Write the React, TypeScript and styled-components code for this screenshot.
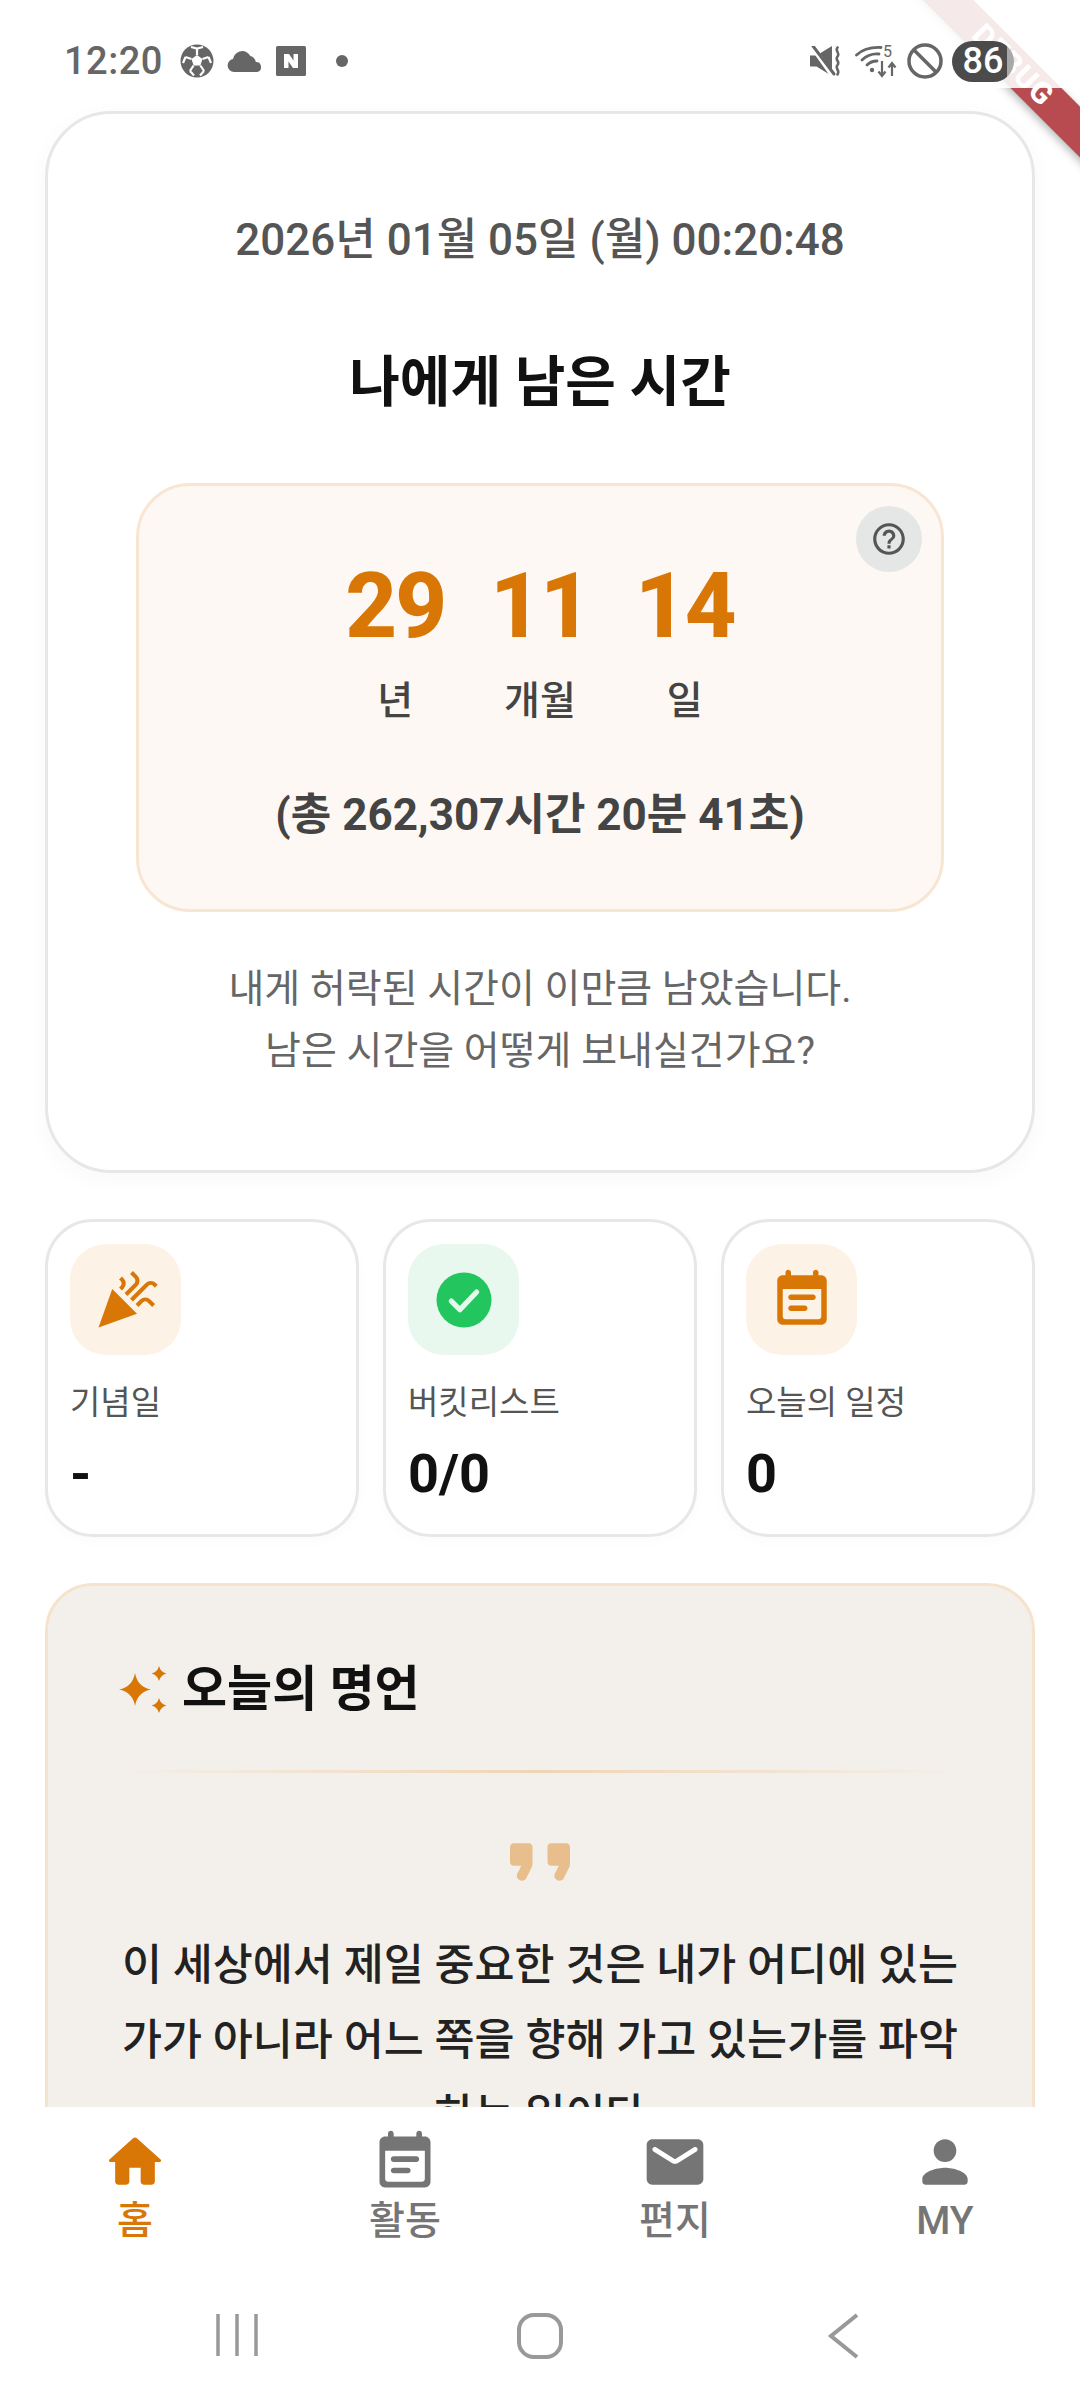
import React from "react";
import styled, { createGlobalStyle } from "styled-components";
import { MdCelebration, MdHelpOutline } from "react-icons/md";

const orange = "#d97706";

const GlobalStyle = createGlobalStyle`
  html, body {
    margin: 0;
    padding: 0;
    background: #fff;
  }
  * { box-sizing: border-box; }
`;

const Page = styled.div`
  position: relative;
  width: 1080px;
  height: 2400px;
  display: flex;
  flex-direction: column;
  overflow: hidden;
  background: #fff;
  font-family: Roboto, "Noto Sans CJK KR", sans-serif;
`;

/* status bar */
const StatusBar = styled.div`
  position: relative;
  z-index: 3;
  height: 88px;
  flex: none;
  display: flex;
  align-items: center;
  justify-content: space-between;
  padding: 34px 66px 0 64px;
  background: rgba(255, 255, 255, 0.88);
  color: #666;
`;

const StatusGroup = styled.div<{ $gap: number }>`
  display: flex;
  align-items: center;
  gap: ${(p) => p.$gap}px;
`;

const Clock = styled.span`
  font-size: 38px;
  font-weight: 500;
  letter-spacing: 0.5px;
  margin-right: 4px;
`;

const DotGap = styled.span`
  width: 4px;
`;

const Battery = styled.div`
  width: 62px;
  height: 41px;
  margin-left: 1px;
  border-radius: 21px;
  overflow: hidden;
  display: flex;
  align-items: center;
  justify-content: center;
  color: #fff;
  font-size: 36px;
  font-weight: 500;
  background: linear-gradient(to right, #4b4b4b 88%, #a8a8a8 88%);
`;

const Ribbon = styled.div`
  position: absolute;
  z-index: 2;
  top: 47px;
  left: 863px;
  width: 300px;
  height: 36px;
  transform: rotate(45deg);
  background: rgba(165, 30, 35, 0.8);
  box-shadow: 0 3px 9px rgba(0, 0, 0, 0.28);
  color: #fff;
  font-size: 30px;
  font-weight: 800;
  line-height: 36px;
  text-align: center;
  letter-spacing: 1px;
`;

/* scrolling content */
const Scroll = styled.main`
  flex: 1;
  min-height: 0;
  overflow: hidden;
  display: flex;
  flex-direction: column;
  gap: 46px;
  padding: 23px 45px 0;
`;

const HeroCard = styled.section`
  flex: none;
  height: 1062px;
  background: #fff;
  border: 3px solid #e7e7e7;
  border-radius: 66px;
  box-shadow: 0 6px 24px rgba(0, 0, 0, 0.03);
  display: flex;
  flex-direction: column;
  align-items: center;
  padding: 96px 88px 0;
`;

const DateText = styled.div`
  font-size: 44px;
  line-height: 60px;
  font-weight: 500;
  color: #555;
`;

const HeroTitle = styled.h1`
  margin: 72px 0 0;
  font-size: 55px;
  line-height: 80px;
  font-weight: 700;
  color: #111;
`;

const RemainBox = styled.div`
  position: relative;
  width: 808px;
  height: 429px;
  margin-top: 61px;
  padding-top: 76px;
  background: #fdf8f3;
  border: 3px solid #f8e6d2;
  border-radius: 54px;
  display: flex;
  flex-direction: column;
  align-items: center;
`;

const HelpButton = styled.div`
  position: absolute;
  top: 20px;
  right: 19px;
  width: 66px;
  height: 66px;
  border-radius: 50%;
  background: #e5e6e6;
  color: #555;
  display: flex;
  align-items: center;
  justify-content: center;
  font-size: 38px;
`;

const Units = styled.div`
  display: flex;
  gap: 45px;
`;

const Unit = styled.div`
  display: flex;
  flex-direction: column;
  align-items: center;
`;

const CountValue = styled.div`
  font-size: 90px;
  line-height: 90px;
  font-weight: 800;
  letter-spacing: -2px;
  color: ${orange};
`;

const UnitLabel = styled.div`
  margin-top: 26px;
  font-size: 39px;
  line-height: 46px;
  font-weight: 500;
  color: #444;
`;

const TotalText = styled.div`
  margin-top: 61px;
  font-size: 44px;
  line-height: 60px;
  font-weight: 700;
  color: #444;
`;

const Caption = styled.p`
  margin: 46px 0 0;
  font-size: 39px;
  line-height: 62px;
  text-align: center;
  color: #666;
`;

const StatGrid = styled.div`
  flex: none;
  display: grid;
  grid-template-columns: repeat(3, 1fr);
  gap: 24px;
`;

const StatCard = styled.div`
  height: 318px;
  padding: 22px;
  background: #fff;
  border: 3px solid #e7e7e7;
  border-radius: 48px;
  box-shadow: 0 4px 14px rgba(0, 0, 0, 0.02);
`;

const StatIcon = styled.div<{ $bg: string }>`
  width: 111px;
  height: 111px;
  border-radius: 36px;
  background: ${(p) => p.$bg};
  color: ${orange};
  display: flex;
  align-items: center;
  justify-content: center;
  font-size: 66px;
`;

const StatLabel = styled.div`
  margin-top: 24px;
  font-size: 33px;
  line-height: 48px;
  color: #555;
`;

const StatValue = styled.div`
  margin-top: 15px;
  font-size: 54px;
  line-height: 64px;
  font-weight: 700;
  color: #111;
`;

const QuoteCard = styled.section`
  flex: none;
  height: 800px;
  padding: 71px 71px 0;
  background: #f3f0eb;
  border: 3px solid #f6e3cd;
  border-radius: 48px;
  display: flex;
  flex-direction: column;
`;

const QuoteHeader = styled.div`
  display: flex;
  align-items: center;
  gap: 15px;
`;

const QuoteTitle = styled.h2`
  margin: 0;
  font-size: 49px;
  line-height: 66px;
  font-weight: 700;
  color: #111;
`;

const Divider = styled.div`
  height: 3px;
  margin: 47px -10px 0;
  background: linear-gradient(to right, transparent, #f0d5b4 50%, transparent);
`;

const QuoteMark = styled.div`
  display: flex;
  justify-content: center;
  margin-top: 44px;
  color: #e8bf8c;
`;

const QuoteText = styled.p`
  margin: 21px -30px 0;
  font-size: 43.5px;
  line-height: 75px;
  font-weight: 500;
  text-align: center;
  color: #222;
`;

/* bottom navigation */
const BottomNav = styled.nav`
  position: relative;
  z-index: 1;
  flex: none;
  height: 165px;
  padding-top: 21px;
  display: grid;
  grid-template-columns: repeat(4, 1fr);
  background: #fff;
`;

const NavItem = styled.div<{ $active?: boolean }>`
  display: flex;
  flex-direction: column;
  align-items: center;
  color: ${(p) => (p.$active ? orange : "#757575")};
`;

const NavLabel = styled.span`
  margin-top: 2px;
  font-size: 39px;
  line-height: 46px;
  font-weight: 500;
`;

const SystemNav = styled.div`
  flex: none;
  height: 128px;
  padding: 41px 0 0 207px;
  display: flex;
  gap: 243px;
  background: #fff;
  color: #999;
`;

const Icon = ({ d, size = 68 }: { d: string; size?: number }) => (
  <svg width={size} height={size} viewBox="0 0 24 24" fill="currentColor">
    <path d={d} />
  </svg>
);

const homePath =
  "M10 19v-5h4v5c0 .55.45 1 1 1h3c.55 0 1-.45 1-1v-7h1.7c.46 0 .68-.57.33-.87L12.67 3.6c-.38-.34-.96-.34-1.34 0l-8.36 7.53c-.34.3-.13.87.33.87H5v7c0 .55.45 1 1 1h3c.55 0 1-.45 1-1z";
const mailPath =
  "M20 4H4c-1.1 0-2 .9-2 2v12c0 1.1.9 2 2 2h16c1.1 0 2-.9 2-2V6c0-1.1-.9-2-2-2zm-.4 4.25l-6.54 4.09c-.65.41-1.47.41-2.12 0L4.4 8.25c-.25-.16-.4-.43-.4-.72 0-.67.73-1.07 1.3-.72L12 11l6.7-4.19c.57-.35 1.3.05 1.3.72 0 .29-.15.56-.4.72z";
const personPath =
  "M12 12c2.21 0 4-1.79 4-4s-1.79-4-4-4-4 1.79-4 4 1.79 4 4 4zm0 2c-2.67 0-8 1.34-8 4v1c0 .55.45 1 1 1h14c.55 0 1-.45 1-1v-1c0-2.66-5.33-4-8-4z";
const notePath =
  "M19 3h-1V2c0-.55-.45-1-1-1s-1 .45-1 1v1H8V2c0-.55-.45-1-1-1s-1 .45-1 1v1H5c-1.1 0-2 .9-2 2v14c0 1.1.9 2 2 2h14c1.1 0 2-.9 2-2V5c0-1.1-.9-2-2-2zm-1 16H6c-.55 0-1-.45-1-1V8h14v10c0 .55-.45 1-1 1zM8 10h8c.55 0 1 .45 1 1s-.45 1-1 1H8c-.55 0-1-.45-1-1s.45-1 1-1zm0 4h5c.55 0 1 .45 1 1s-.45 1-1 1H8c-.55 0-1-.45-1-1s.45-1 1-1z";
const quotePath =
  "M7.17 17c.51 0 .98-.29 1.2-.74l1.42-2.84c.14-.28.21-.58.21-.89V8c0-.55-.45-1-1-1H5c-.55 0-1 .45-1 1v4c0 .55.45 1 1 1h2l-1.03 2.06c-.45.89.2 1.94 1.2 1.94zm10 0c.51 0 .98-.29 1.2-.74l1.42-2.84c.14-.28.21-.58.21-.89V8c0-.55-.45-1-1-1h-4c-.55 0-1 .45-1 1v4c0 .55.45 1 1 1h2l-1.03 2.06c-.45.89.2 1.94 1.2 1.94z";

const CheckBadge = () => (
  <svg width="66" height="66" viewBox="0 0 24 24">
    <circle cx="12" cy="12" r="10" fill="#22c55e" />
    <path d="M7.4 12.4l3.1 3.1 6.1-6.4" fill="none" stroke="#e8f8ee" strokeWidth="1.9" strokeLinecap="round" strokeLinejoin="round" />
  </svg>
);

const Sparkles = () => (
  <svg width="48" height="48" viewBox="0 0 48 48" fill={orange}>
    <path d="M16 7Q18.500 21 32 23.500Q18.500 26 16 40Q13.500 26 0 23.500Q13.500 21 16 7Z" />
    <path d="M40 0Q41.500 6 47.500 7.500Q41.500 9 40 15Q38.500 9 32.500 7.500Q38.500 6 40 0Z" />
    <path d="M40 32Q41.500 38 47.500 39.500Q41.500 41 40 47Q38.500 41 32.500 39.500Q38.500 38 40 32Z" />
  </svg>
);

const SoccerIcon = () => (
  <svg width="34" height="34" viewBox="0 0 34 34">
    <circle cx="17" cy="17" r="16.500" fill="#666" />
    <path d="M17 11l5.500 4-2.100 6.500h-6.800L11.500 15z" fill="#fff" />
    <path d="M17 11V4.500M22.500 15l6-2M20.400 21.500l3.700 5.500M13.600 21.500l-3.700 5.500M11.500 15l-6-2M11 3l6 1.500 6-1.500M28.500 13l2.500 6M24 27l-4 4.500M10 27l4 4.500M5.500 13l-2.500 6" stroke="#fff" strokeWidth="2.200" fill="none" />
  </svg>
);

const CloudIcon = () => (
  <svg width="36" height="22" viewBox="0 0 36 22" fill="#666">
    <path d="M7 22a6.500 6.500 0 0 1-1-12.900A9.500 9.500 0 0 1 15 1c3.700 0 6.800 2 8.300 5a7.500 7.500 0 0 1 5.500 6.100A5 5 0 0 1 30 22z" />
  </svg>
);

const NaverIcon = () => (
  <svg width="30" height="30" viewBox="0 0 30 30">
    <rect width="30" height="30" rx="1.500" fill="#666" />
    <path d="M8 8h5l4.500 6.500V8H22v14h-5l-4.500-6.500V22H8z" fill="#fff" />
  </svg>
);

const Dot = () => (
  <svg width="12" height="12" viewBox="0 0 12 12" fill="#666">
    <circle cx="6" cy="6" r="6" />
  </svg>
);

const MuteIcon = () => (
  <svg width="37" height="30" viewBox="0 0 37 30">
    <path d="M0 9.500h6.500L22 0v30L6.500 20.500H0z" fill="#666" />
    <path d="M-1 -4L23 30" stroke="#fff" strokeWidth="5" />
    <path d="M3 0L24 28" stroke="#666" strokeWidth="3" strokeLinecap="round" />
    <path d="M27.500 1.500c-3 3.500 3 5.500 0 9s3 5 0 8.500 3 5 0 9.500" stroke="#666" strokeWidth="2.600" fill="none" strokeLinecap="round" />
  </svg>
);

const WifiIcon = () => (
  <svg width="44" height="34" viewBox="0 0 44 34">
    <g fill="none" stroke="#666" strokeWidth="2.800" strokeLinecap="round">
      <path d="M1.500 11C8 5 16 3 26 3.500" />
      <path d="M7 16C12 11 18 9.500 24 10" />
      <path d="M12 21c3-3 6-4 10-4" />
    </g>
    <circle cx="17" cy="26" r="2.200" fill="#666" />
    <path d="M27 17v14M23.500 27.500L27 32l3.500-4.500M37 32V19M33.500 23.500L37 19l3.500 4.500" fill="none" stroke="#666" strokeWidth="2.200" />
    <text x="28" y="13" fontSize="16" fontFamily="Roboto, sans-serif" fill="#666">5</text>
  </svg>
);

const BlockIcon = () => (
  <svg width="36" height="36" viewBox="0 0 36 36" fill="none" stroke="#666" strokeWidth="3.500">
    <circle cx="18" cy="18" r="16" />
    <path d="M7 7l22 22" />
  </svg>
);

const RecentsIcon = () => (
  <svg width="60" height="44" viewBox="0 0 60 44" stroke="currentColor" strokeWidth="3.500">
    <path d="M11 1v42M30 1v42M49 1v42" />
  </svg>
);

const HomeKeyIcon = () => (
  <svg width="60" height="46" viewBox="0 0 60 46" fill="none" stroke="currentColor" strokeWidth="4">
    <rect x="9" y="2" width="42" height="42" rx="15" />
  </svg>
);

const BackIcon = () => (
  <svg width="60" height="46" viewBox="0 0 60 46" fill="none" stroke="currentColor" strokeWidth="4">
    <path d="M44 2L18 23l26 21" />
  </svg>
);

const counters = [
  { value: "29", unit: "년" },
  { value: "11", unit: "개월" },
  { value: "14", unit: "일" },
];

const navItems = [
  { label: "홈", path: homePath, active: true },
  { label: "활동", path: notePath },
  { label: "편지", path: mailPath },
  { label: "MY", path: personPath },
];

const App: React.FC = () => {
  return (
    <Page>
      <GlobalStyle />
      <Ribbon>DEBUG</Ribbon>
      <StatusBar>
        <StatusGroup $gap={13}>
          <Clock>12:20</Clock>
          <SoccerIcon />
          <CloudIcon />
          <NaverIcon />
          <DotGap />
          <Dot />
        </StatusGroup>
        <StatusGroup $gap={8}>
          <MuteIcon />
          <WifiIcon />
          <BlockIcon />
          <Battery>86</Battery>
        </StatusGroup>
      </StatusBar>

      <Scroll>
        <HeroCard>
          <DateText>2026년 01월 05일 (월) 00:20:48</DateText>
          <HeroTitle>나에게 남은 시간</HeroTitle>
          <RemainBox>
            <HelpButton>
              <MdHelpOutline />
            </HelpButton>
            <Units>
              {counters.map((c) => (
                <Unit key={c.unit}>
                  <CountValue>{c.value}</CountValue>
                  <UnitLabel>{c.unit}</UnitLabel>
                </Unit>
              ))}
            </Units>
            <TotalText>(총 262,307시간 20분 41초)</TotalText>
          </RemainBox>
          <Caption>
            내게 허락된 시간이 이만큼 남았습니다.
            <br />
            남은 시간을 어떻게 보내실건가요?
          </Caption>
        </HeroCard>

        <StatGrid>
          <StatCard>
            <StatIcon $bg="#fdf2e6">
              <MdCelebration />
            </StatIcon>
            <StatLabel>기념일</StatLabel>
            <StatValue>-</StatValue>
          </StatCard>
          <StatCard>
            <StatIcon $bg="#e8f8ee">
              <CheckBadge />
            </StatIcon>
            <StatLabel>버킷리스트</StatLabel>
            <StatValue>0/0</StatValue>
          </StatCard>
          <StatCard>
            <StatIcon $bg="#fdf2e6">
              <Icon d={notePath} size={66} />
            </StatIcon>
            <StatLabel>오늘의 일정</StatLabel>
            <StatValue>0</StatValue>
          </StatCard>
        </StatGrid>

        <QuoteCard>
          <QuoteHeader>
            <Sparkles />
            <QuoteTitle>오늘의 명언</QuoteTitle>
          </QuoteHeader>
          <Divider />
          <QuoteMark>
            <Icon d={quotePath} size={90} />
          </QuoteMark>
          <QuoteText>
            이 세상에서 제일 중요한 것은 내가 어디에 있는
            <br />
            가가 아니라 어느 쪽을 향해 가고 있는가를 파악
            <br />
            하는 일이다
          </QuoteText>
        </QuoteCard>
      </Scroll>

      <BottomNav>
        {navItems.map((item) => (
          <NavItem key={item.label} $active={item.active}>
            <Icon d={item.path} />
            <NavLabel>{item.label}</NavLabel>
          </NavItem>
        ))}
      </BottomNav>

      <SystemNav>
        <RecentsIcon />
        <HomeKeyIcon />
        <BackIcon />
      </SystemNav>
    </Page>
  );
};

export default App;
